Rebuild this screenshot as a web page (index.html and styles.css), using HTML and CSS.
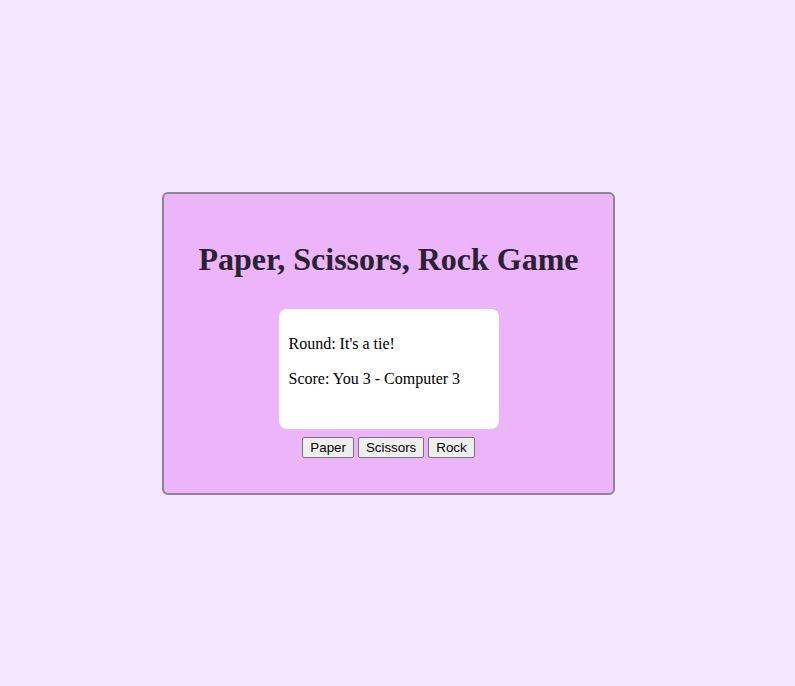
FILE: index.html
```html
<!DOCTYPE html>
<html>
<head>
<meta charset="utf-8">
<link rel="stylesheet" href="styles.css">
</head>
<body>
<div class="page">
  <div class="card">
    <h1 class="title">Paper, Scissors, Rock Game</h1>
    <div class="results">
      <p class="line">Round: It's a tie!</p>
      <p class="line">Score: You 3 - Computer 3</p>
    </div>
    <div class="buttons">
      <button class="btn">Paper</button>
      <button class="btn">Scissors</button>
      <button class="btn">Rock</button>
    </div>
  </div>
</div>
</body>
</html>
```
FILE: styles.css
```css
html, body {
  margin: 0;
  padding: 0;
  background: #f5e6ff;
}
.page {
  height: 686px;
  display: flex;
  align-items: center;
  justify-content: center;
  padding-right: 18px;
  box-sizing: border-box;
}
.card {
  width: 453px;
  height: 303px;
  box-sizing: border-box;
  background: #ecb4f9;
  border: 2px solid #8f8196;
  border-radius: 6px;
  padding-top: 26px;
  display: flex;
  flex-direction: column;
  align-items: center;
  font-family: "Liberation Serif", serif;
}
.title {
  margin: 21px 0 31px;
  font-size: 32px;
  font-weight: bold;
  color: #2a2230;
  line-height: 37px;
}
.results {
  width: 220px;
  height: 120px;
  box-sizing: border-box;
  background: #ffffff;
  border-radius: 8px;
  padding: 9px 10px;
  color: #000;
}
.line {
  margin: 16px 0;
  font-size: 16px;
  line-height: 19px;
}
.buttons {
  margin-top: 8px;
  display: flex;
  gap: 4px;
}
.btn {
  font-family: "Liberation Sans", Arial, sans-serif;
  font-size: 13.33px;
  height: 21px;
  padding: 0 7px;
  background: #efefef;
  border: 1px solid #767676;
  border-radius: 2px;
  color: #000;
}
```
